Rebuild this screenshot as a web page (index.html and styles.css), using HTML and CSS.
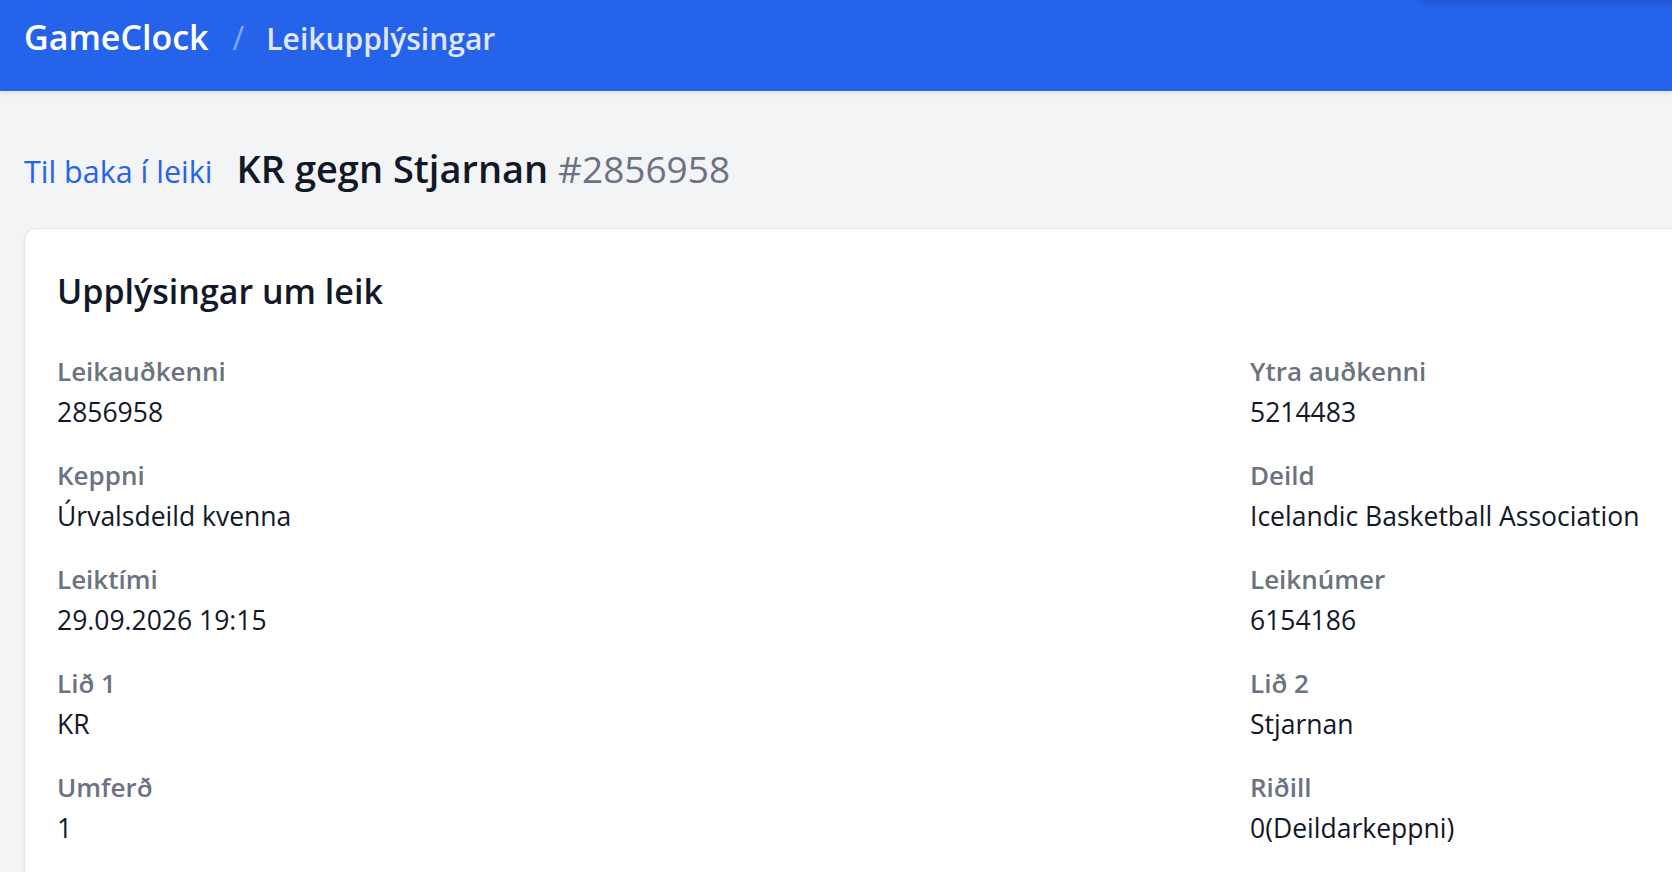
FILE: index.html
```html
<!DOCTYPE html>
<html lang="is">
<head>
    <meta charset="UTF-8">
    <meta name="viewport" content="width=device-width, initial-scale=1.0">
    <title>Leikupplýsingar - GameClock</title>
    <link rel="stylesheet" href="styles.css">
</head>
<body>
    <header class="topbar">
        <a class="brand" href="#">GameClock</a>
        <span class="crumb-sep">/</span>
        <span class="crumb">Leikupplýsingar</span>
        <div class="toast-edge"></div>
    </header>

    <main class="page">
        <div class="title-row">
            <a class="back-link" href="#">Til baka í leiki</a>
            <h1 class="game-title">KR gegn Stjarnan <span class="game-id">#2856958</span></h1>
        </div>

        <section class="card">
            <h2 class="card-title">Upplýsingar um leik</h2>
            <dl class="info-grid">
                <div class="info-item">
                    <dt>Leikauðkenni</dt>
                    <dd>2856958</dd>
                </div>
                <div class="info-item">
                    <dt>Ytra auðkenni</dt>
                    <dd>5214483</dd>
                </div>
                <div class="info-item">
                    <dt>Keppni</dt>
                    <dd>Úrvalsdeild kvenna</dd>
                </div>
                <div class="info-item">
                    <dt>Deild</dt>
                    <dd>Icelandic Basketball Association</dd>
                </div>
                <div class="info-item">
                    <dt>Leiktími</dt>
                    <dd>29.09.2026 19:15</dd>
                </div>
                <div class="info-item">
                    <dt>Leiknúmer</dt>
                    <dd>6154186</dd>
                </div>
                <div class="info-item">
                    <dt>Lið 1</dt>
                    <dd>KR</dd>
                </div>
                <div class="info-item">
                    <dt>Lið 2</dt>
                    <dd>Stjarnan</dd>
                </div>
                <div class="info-item">
                    <dt>Umferð</dt>
                    <dd>1</dd>
                </div>
                <div class="info-item">
                    <dt>Riðill</dt>
                    <dd>0(Deildarkeppni)</dd>
                </div>
            </dl>
        </section>
    </main>
</body>
</html>
```

FILE: styles.css
```css
html, body {
    overflow: hidden;
}
body {
    margin: 0;
    font-family: "Open Sans", "Noto Sans", sans-serif;
    background-color: #f3f4f6;
    color: #111827;
}
a {
    text-decoration: none;
}

/* top bar */
.topbar {
    position: relative;
    height: 91px;
    box-sizing: border-box;
    padding: 14px 24px 0;
    display: flex;
    align-items: baseline;
    background-color: #2563eb;
    box-shadow: 0 2px 6px rgba(0,0,0,0.08);
}
.brand {
    color: #fff;
    font-size: 34px;
    font-weight: 600;
    line-height: 46px;
}
.crumb-sep {
    margin: 0 22px 0 24px;
    color: rgba(255,255,255,0.45);
    font-size: 32px;
}
.crumb {
    color: #e0e7ff;
    font-size: 30px;
    font-weight: 600;
}
.toast-edge {
    position: absolute;
    top: -40px;
    left: 1420px;
    width: 400px;
    height: 40px;
    border-radius: 8px;
    box-shadow: 0 2px 8px rgba(0,0,0,0.2);
}

/* page */
.page {
    padding: 53px 24px 0;
}
.title-row {
    display: flex;
    align-items: baseline;
    gap: 24px;
    margin-bottom: 35px;
}
.back-link {
    color: #2563eb;
    font-size: 30.5px;
}
.game-title {
    margin: 0;
    font-size: 38px;
    font-weight: 600;
    line-height: 1.3;
    white-space: nowrap;
}
.game-id {
    color: #6b7280;
    font-weight: 400;
    font-size: 37px;
}

.card {
    width: max-content;
    padding: 40px 32px 40px;
    background: #fff;
    border: 1px solid #e5e7eb;
    border-radius: 12px;
    box-shadow: 0 1px 3px rgba(0,0,0,0.06);
}
.card-title {
    margin: 0 0 40px;
    font-size: 34px;
    font-weight: 600;
    line-height: 44px;
}
.info-grid {
    margin: 0;
    display: grid;
    grid-template-columns: 1161px 1161px;
    column-gap: 32px;
    row-gap: 25px;
}
.info-item dt {
    color: #6b7280;
    font-size: 26px;
    font-weight: 600;
    line-height: 36px;
}
.info-item dd {
    margin: 3px 0 0;
    font-size: 26.5px;
    line-height: 40px;
}
```
